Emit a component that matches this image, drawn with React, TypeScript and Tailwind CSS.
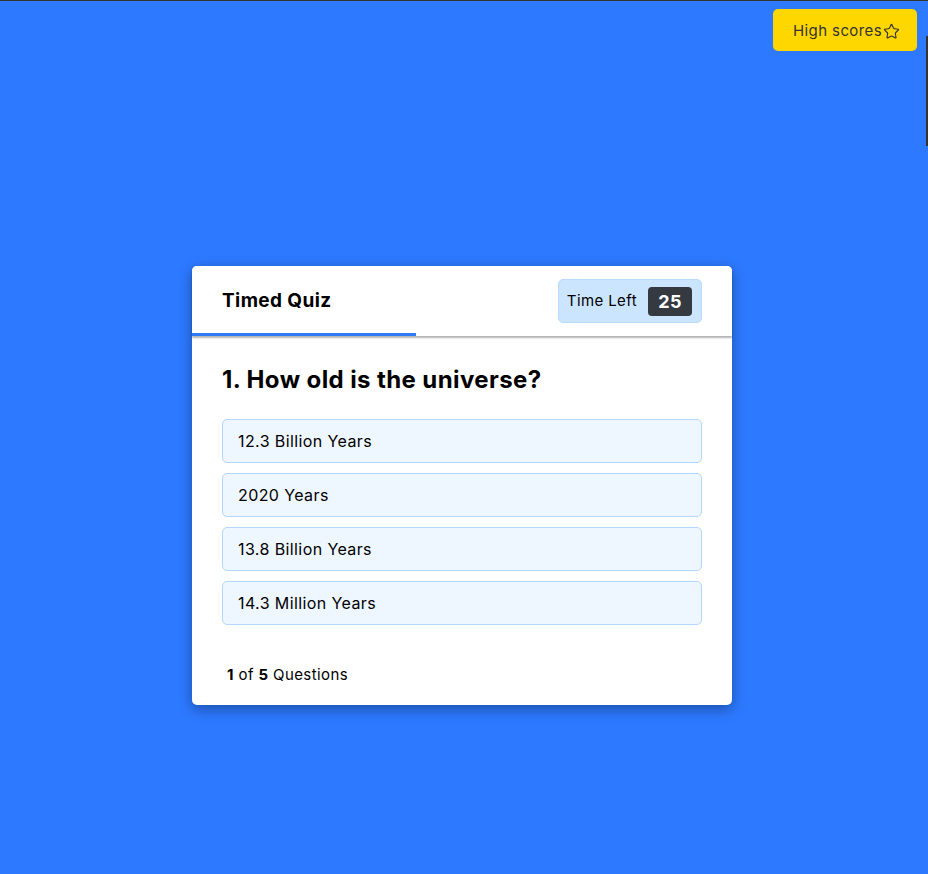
import React from "react";
import { Star } from "lucide-react";

const ANSWERS = ["12.3 Billion Years", "2020 Years", "13.8 Billion Years", "14.3 Million Years"];

export default function App() {
  return (
    <div
      className="relative min-h-screen bg-[#2d79ff] border-t border-[#333] overflow-hidden tracking-[0.025em]"
      style={{ fontFamily: "Inter, 'Noto Sans', sans-serif" }}
    >
      {/* high scores */}
      <div className="flex justify-end pt-[8px] pr-[11px]">
        <button className="flex items-center h-[42px] w-[144px] pl-[20px] pt-[2px] rounded-[5px] bg-[#ffd700] text-[15px] text-[#333]">
          High scores
          <Star size={17} strokeWidth={1.6} className="ml-[1px]" />
        </button>
      </div>

      <div className="absolute right-0 top-[35px] w-[2px] h-[110px] bg-[#333]" />

      {/* quiz card */}
      <div className="ml-[192px] mt-[215px] w-[540px] rounded-[5px] bg-white shadow-[0_4px_14px_rgba(0,0,0,0.35)]">
        <header className="relative rounded-t-[5px] bg-white shadow-[0_2px_2px_rgba(0,0,0,0.3)]">
          <div className="flex items-center justify-between h-[70px] px-[30px]">
            <h1 className="text-[19px] font-bold text-black">Timed Quiz</h1>
            <div className="flex items-center h-[44px] pl-[8px] pr-[9px] rounded-[5px] bg-[#cce5ff] border border-[#b8daff]">
              <span className="text-[15px] text-black">Time Left</span>
              <span className="ml-[11px] flex items-center justify-center w-[44px] h-[29px] rounded-[4px] bg-[#343a40] text-white text-[18px] font-bold">
                25
              </span>
            </div>
          </div>
          {/* time line */}
          <div className="absolute left-0 bottom-0 h-[3px] w-[224px] bg-[#2f7bf5]" />
        </header>

        <section className="px-[30px] pt-[26px]">
          <h2 className="text-[24px] leading-[36px] font-bold text-black">1. How old is the universe?</h2>
          <div className="mt-[21px] flex flex-col gap-[10px]">
            {ANSWERS.map((a) => (
              <button
                key={a}
                className="flex items-center h-[44px] px-[15px] rounded-[5px] bg-[#eef6ff] border border-[#b3d7ff] text-left text-[16px] text-black"
              >
                {a}
              </button>
            ))}
          </div>
        </section>

        <footer className="px-[35px] pt-[39px] pb-[19px] text-[15px] leading-[22px] text-black">
          <span className="font-bold">1</span> of <span className="font-bold">5</span> Questions
        </footer>
      </div>
    </div>
  );
}
